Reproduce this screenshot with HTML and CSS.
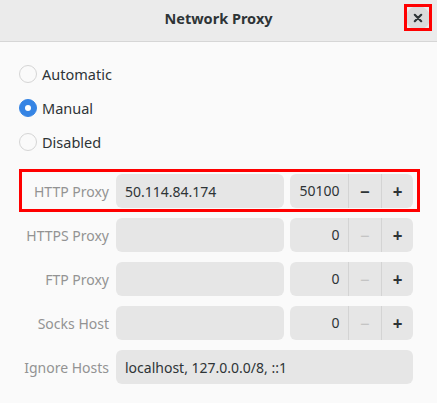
FILE: index.html
```html
<!DOCTYPE html>
<html lang="en">
<head>
    <meta charset="UTF-8">
    <meta name="viewport" content="width=device-width, initial-scale=1.0">
    <title>Network Proxy</title>
    <link rel="stylesheet" href="styles.css">
</head>
<body>
    <div class="dialog">
        <div class="header">
            <div class="title">Network Proxy</div>
            <div class="close-box">
                <div class="close">
                    <svg width="10" height="10" viewBox="0 0 10 10">
                        <path d="M1.8 1.8 L8.2 8.2 M8.2 1.8 L1.8 8.2" stroke="#2e3436" stroke-width="2.2" stroke-linecap="round"/>
                    </svg>
                </div>
            </div>
        </div>

        <div class="content">
            <div class="modes">
                <label class="mode"><span class="radio"></span>Automatic</label>
                <label class="mode"><span class="radio checked"></span>Manual</label>
                <label class="mode"><span class="radio"></span>Disabled</label>
            </div>

            <div class="rows">
                <div class="row highlight">
                    <div class="label">HTTP Proxy</div>
                    <div class="entry">50.114.84.174</div>
                    <div class="spin">
                        <div class="value">50100</div>
                        <div class="step">&minus;</div>
                        <div class="step">+</div>
                    </div>
                </div>
                <div class="row">
                    <div class="label">HTTPS Proxy</div>
                    <div class="entry"></div>
                    <div class="spin">
                        <div class="value">0</div>
                        <div class="step off">&minus;</div>
                        <div class="step">+</div>
                    </div>
                </div>
                <div class="row">
                    <div class="label">FTP Proxy</div>
                    <div class="entry"></div>
                    <div class="spin">
                        <div class="value">0</div>
                        <div class="step off">&minus;</div>
                        <div class="step">+</div>
                    </div>
                </div>
                <div class="row">
                    <div class="label">Socks Host</div>
                    <div class="entry"></div>
                    <div class="spin">
                        <div class="value">0</div>
                        <div class="step off">&minus;</div>
                        <div class="step">+</div>
                    </div>
                </div>
                <div class="row">
                    <div class="label">Ignore Hosts</div>
                    <div class="entry wide">localhost, 127.0.0.0/8, ::1</div>
                </div>
            </div>
        </div>
    </div>
</body>
</html>
```

FILE: styles.css
```css
body {
    margin: 0;
    background: #fafafa;
    color: #2e3436;
    font-family: "Noto Sans", "DejaVu Sans", sans-serif;
    font-size: 14px;
}

.header {
    height: 41px;
    background: #ebebeb;
    border-bottom: 1px solid #d6d6d6;
    display: flex;
    align-items: center;
    justify-content: center;
    position: relative;
}

.title {
    font-weight: bold;
    font-size: 14.5px;
    color: #2e3436;
    margin-top: -5px;
}

.close-box {
    position: absolute;
    left: 404px;
    top: 4px;
    width: 22px;
    height: 21px;
    border: 3px solid #ff0000;
    display: flex;
    align-items: center;
    justify-content: center;
    overflow: hidden;
}

.close {
    width: 24px;
    height: 24px;
    flex: none;
    border-radius: 50%;
    background: #dadada;
    display: flex;
    align-items: center;
    justify-content: center;
}

.content {
    padding: 15px 22px 0 22px;
}

.modes {
    display: flex;
    flex-direction: column;
}

.mode {
    height: 34px;
    display: flex;
    align-items: center;
    gap: 5px;
    margin-left: -3px;
    font-size: 14.5px;
}

.radio {
    width: 16px;
    height: 16px;
    border: 1.5px solid #d5d5d5;
    border-radius: 50%;
    background: #fafafa;
    position: relative;
}

.radio.checked {
    background: #3584e4;
    border-color: #3584e4;
}

.radio.checked::after {
    content: "";
    position: absolute;
    left: 5px;
    top: 5px;
    width: 6px;
    height: 6px;
    border-radius: 50%;
    background: #fff;
}

.rows {
    margin-top: 15px;
    display: flex;
    flex-direction: column;
    gap: 10px;
}

.row {
    display: flex;
    align-items: center;
    height: 34px;
}

.row.highlight {
    border: 3px solid #ff0000;
    padding: 2px 2px 1px 0;
    margin: -5px -5px -4px -3px;
}

.label {
    width: 87px;
    flex: none;
    white-space: nowrap;
    text-align: right;
    color: #939393;
    margin-right: 7px;
}

.entry {
    width: 159px;
    height: 34px;
    background: #e6e6e6;
    border-radius: 6px;
    display: flex;
    align-items: center;
    padding-left: 9px;
    box-sizing: content-box;
    margin-right: 6px;
}

.entry.wide {
    width: 288px;
    margin-right: 0;
}

.spin {
    width: 123px;
    height: 34px;
    background: #e6e6e6;
    border-radius: 6px;
    display: flex;
}

.value {
    width: 58px;
    text-align: right;
    padding-right: 8px;
    line-height: 34px;
    box-sizing: border-box;
}

.step {
    width: 33px;
    border-left: 1px solid #d4d4d4;
    display: flex;
    align-items: center;
    justify-content: center;
    font-weight: bold;
    font-size: 17px;
    color: #2e3436;
}

.step:last-child {
    width: 31px;
}

.step.off {
    color: #bdbdbd;
    font-weight: normal;
}
```
